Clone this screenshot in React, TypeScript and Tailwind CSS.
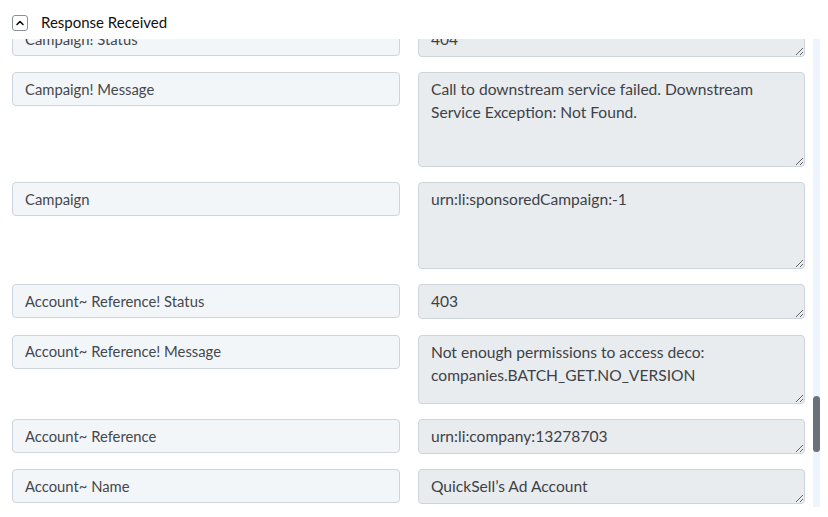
import { ChevronUp } from "lucide-react";

type Row = { label: string; value: string; h: string };

const ROWS: Row[] = [
  { label: "Campaign! Status", value: "404", h: "h-[35px]" },
  {
    label: "Campaign! Message",
    value: "Call to downstream service failed. Downstream Service Exception: Not Found.",
    h: "h-[95px]",
  },
  { label: "Campaign", value: "urn:li:sponsoredCampaign:-1", h: "h-[87px]" },
  { label: "Account~ Reference! Status", value: "403", h: "h-[35px]" },
  {
    label: "Account~ Reference! Message",
    value: "Not enough permissions to access deco: companies.BATCH_GET.NO_VERSION",
    h: "h-[69px]",
  },
  { label: "Account~ Reference", value: "urn:li:company:13278703", h: "h-[35px]" },
  { label: "Account~ Name", value: "QuickSell’s Ad Account", h: "h-[35px]" },
];

function FieldRow({ label, value, h }: Row) {
  return (
    <div className="flex items-start gap-[18px]">
      <div className="flex h-[34px] w-[388px] shrink-0 items-center rounded-[4px] border border-[#ced4da] bg-[#f3f6f9] px-3 text-[14.8px] text-[#43484e]">
        {label}
      </div>
      <textarea
        readOnly
        value={value}
        className={`${h} w-[387px] shrink-0 rounded-[4px] border border-[#ced4da] bg-[#e9ecef] px-3 pt-[5px] text-[15.6px] leading-[23px] text-[#3d4247] outline-none`}
      />
    </div>
  );
}

export default function App() {
  return (
    <div className="flex h-[517px] w-[828px] flex-col overflow-hidden bg-white font-['Lato','Liberation_Sans',sans-serif]">
      <div className="flex h-[39px] shrink-0 items-center gap-[13px] pl-3 pt-[6px]">
        <button
          type="button"
          className="flex h-4 w-4 items-center justify-center rounded-[3px] border border-[#8a8f96] bg-white text-black"
        >
          <ChevronUp size={12} strokeWidth={3} />
        </button>
        <span className="text-[15px] text-[#111]">Response Received</span>
      </div>
      <div className="flex min-h-0 flex-1 pb-[10px]">
        <div className="min-w-0 flex-1 overflow-hidden">
          <div className="-mt-[17.2px] flex flex-col gap-[15.2px] pl-3">
            {ROWS.map((r) => (
              <FieldRow key={r.label} {...r} />
            ))}
          </div>
        </div>
        <div className="mr-2 ml-2 flex w-[7px] shrink-0 flex-col bg-[#eef4fd]">
          <div className="h-[357px] shrink-0" />
          <div className="h-[56px] rounded-full bg-[#6b7079]" />
        </div>
      </div>
    </div>
  );
}
